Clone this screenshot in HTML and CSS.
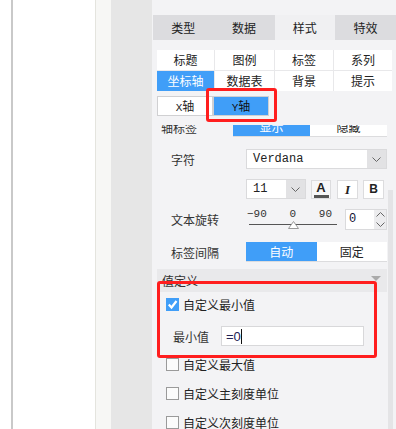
FILE: index.html
```html
<!DOCTYPE html>
<html lang="zh-CN">
<head>
    <meta charset="UTF-8">
    <title>坐标轴设置</title>
    <link rel="stylesheet" href="styles.css">
</head>
<body>
<div class="screen">
    <div class="margin"></div>
    <div class="rule"></div>
    <div class="canvas"></div>
    <div class="strip"></div>
    <div class="gutter"></div>

    <div class="panel">
        <div class="tabs">
            <div class="tab">类型</div>
            <div class="tab">数据</div>
            <div class="tab on">样式</div>
            <div class="tab">特效</div>
        </div>

        <div class="menu">
            <div class="cell">标题</div>
            <div class="cell">图例</div>
            <div class="cell">标签</div>
            <div class="cell">系列</div>
            <div class="cell on">坐标轴</div>
            <div class="cell">数据表</div>
            <div class="cell">背景</div>
            <div class="cell">提示</div>
        </div>

        <div class="axis-tabs">
            <div class="axis-tab"><span class="mono">X</span>轴</div>
            <div class="axis-tab on"><span class="mono">Y</span>轴</div>
        </div>

        <div class="scroll">
            <div class="content">
                <div class="row row-axis">
                    <div class="label">轴标签</div>
                    <div class="seg">
                        <div class="seg-item on">显示</div>
                        <div class="seg-item">隐藏</div>
                    </div>
                </div>

                <div class="row row-font">
                    <div class="label">字符</div>
                    <div class="select wide">
                        <span class="value mono">Verdana</span>
                        <span class="arrow"><svg width="9" height="5" viewBox="0 0 9 5"><polyline points="0.5,0.5 4.5,4.5 8.5,0.5" fill="none" stroke="#666"/></svg></span>
                    </div>
                </div>

                <div class="row row-size">
                    <div class="label"></div>
                    <div class="select small">
                        <span class="value mono">11</span>
                        <span class="arrow"><svg width="9" height="5" viewBox="0 0 9 5"><polyline points="0.5,0.5 4.5,4.5 8.5,0.5" fill="none" stroke="#666"/></svg></span>
                    </div>
                    <div class="btn btn-color">
                        <span class="glyph-a">A</span>
                        <span class="color-bar"></span>
                    </div>
                    <div class="btn btn-italic">I</div>
                    <div class="btn btn-bold">B</div>
                </div>

                <div class="row row-rotate">
                    <div class="label">文本旋转</div>
                    <div class="slider">
                        <div class="ticks mono">
                            <span>−90</span><span>0</span><span>90</span>
                        </div>
                        <div class="track">
                            <svg class="thumb-mark" width="11" height="8" viewBox="0 0 11 8"><polygon points="5.5,0.5 10.5,7.5 0.5,7.5" fill="#fff" stroke="#999"/></svg>
                        </div>
                    </div>
                    <div class="spinner">
                        <span class="value mono">0</span>
                        <span class="spin-arrows">
                            <svg width="9" height="5" viewBox="0 0 9 5"><polyline points="0.5,4.5 4.5,0.5 8.5,4.5" fill="none" stroke="#666"/></svg>
                            <svg width="9" height="5" viewBox="0 0 9 5"><polyline points="0.5,0.5 4.5,4.5 8.5,0.5" fill="none" stroke="#666"/></svg>
                        </span>
                    </div>
                </div>

                <div class="row row-gap">
                    <div class="label">标签间隔</div>
                    <div class="seg">
                        <div class="seg-item on">自动</div>
                        <div class="seg-item">固定</div>
                    </div>
                </div>

                <div class="section">
                    <span>值定义</span>
                    <span class="caret"></span>
                </div>

                <div class="check-row first">
                    <span class="box checked"><svg width="13" height="13" viewBox="0 0 13 13"><polyline points="2.8,6.5 5.5,9.5 10.5,3" fill="none" stroke="#fff" stroke-width="2.2"/></svg></span>
                    自定义最小值
                </div>
                <div class="row row-min">
                    <div class="label">最小值</div>
                    <div class="input"><span class="formula">=0</span><span class="caret-line"></span></div>
                </div>
                <div class="check-row"><span class="box"></span>自定义最大值</div>
                <div class="check-row"><span class="box"></span>自定义主刻度单位</div>
                <div class="check-row"><span class="box"></span>自定义次刻度单位</div>
            </div>
        </div>

        <div class="scroll-thumb"></div>
        <div class="mark mark-tab"></div>
        <div class="mark mark-min"></div>
    </div>
</div>
</body>
</html>
```

FILE: styles.css
```css
body{
    margin: 0;
    font-family: "Noto Sans CJK SC", "Noto Sans", sans-serif;
    font-size: 12px;
    color: #222;
}
.screen{
    display: flex;
    width: 396px;
    height: 429px;
    overflow: hidden;
}
.margin{
    width: 11px;
    background-color: #fff;
}
.rule{
    width: 2px;
    background-color: #c9c9c9;
}
.canvas{
    width: 82px;
    background-color: #fff;
    border-right: 1px solid #e4e4de;
}
.strip{
    width: 15px;
    background-color: #f7f7f5;
}
.gutter{
    width: 41px;
    background-color: #e6e6e6;
}
.panel{
    position: relative;
    width: 244px;
    background-color: #f3f3f5;
}
.mono{
    font-family: "Liberation Mono", "DejaVu Sans Mono", monospace;
}

/* top tabs */
.tabs{
    display: flex;
    margin: 15px 0 0 1px;
    height: 25px;
    background-color: #dcdcdf;
}
.tab{
    flex: 1;
    text-align: center;
    line-height: 25px;
    font-size: 12px;
}
.tab.on{
    background-color: #f0f0f2;
}

/* sub menu */
.menu{
    display: grid;
    grid-template-columns: 57px 59px 58px 58px;
    grid-auto-rows: 20px;
    gap: 1px;
    width: 235px;
    margin: 10px 0 0 5px;
    background-color: #e8e8ea;
}
.cell{
    background-color: #fff;
    text-align: center;
    line-height: 20px;
}
.cell.on{
    background-color: #409ef8;
    color: #fff;
}

.axis-tabs{
    display: flex;
    margin: 5px 0 0 5px;
}
.axis-tab{
    box-sizing: border-box;
    width: 56px;
    height: 20px;
    line-height: 18px;
    text-align: center;
    background-color: #fff;
    border: 1px solid #d0d0d2;
}
.axis-tab.on{
    background-color: #409ef8;
    color: #111;
}
.axis-tab .mono{
    font-size: 11px;
}

/* scrolled settings */
.scroll{
    margin-top: 9px;
    height: 304px;
    overflow: hidden;
}
.content{
    width: 230px;
    margin: -8px 0 0 5px;
}
.row{
    display: flex;
    align-items: center;
    padding-left: 14px;
    height: 20px;
}
.label{
    width: 75px;
    flex-shrink: 0;
    color: #333;
}
.row-axis{
    padding-left: 4px;
}
.row-axis .label{
    width: 72px;
}
.row-font{
    margin-top: 12px;
}
.row-size{
    margin-top: 10px;
}
.row-rotate{
    margin-top: 10px;
    height: 21px;
}
.row-gap{
    margin-top: 12px;
}

.seg{
    display: flex;
    flex: 1;
    height: 20px;
    background-color: #fff;
    border-bottom: 1px solid #dcdcde;
    box-sizing: border-box;
}
.seg-item{
    flex: 1;
    text-align: center;
    line-height: 20px;
}
.seg-item.on{
    background-color: #409ef8;
    color: #fff;
}

.select{
    box-sizing: border-box;
    display: flex;
    height: 20px;
    background-color: #fff;
    border: 1px solid #dadadc;
}
.select.wide{
    width: 141px;
}
.select.small{
    width: 60px;
}
.select .value{
    flex: 1;
    padding-left: 6px;
    line-height: 18px;
    font-size: 12px;
    color: #222;
}
.arrow{
    display: flex;
    align-items: center;
    justify-content: center;
    width: 19px;
    background-color: #e2e2e4;
}

.btn{
    box-sizing: border-box;
    height: 19px;
    margin-left: 6px;
    border: 1px solid #dcdcde;
    background-color: #fff;
    text-align: center;
    line-height: 17px;
}
.btn-color{
    width: 20px;
    margin-left: 5px;
    background-color: #f7f7f8;
    display: flex;
    flex-direction: column;
    align-items: center;
}
.glyph-a{
    font-family: "Liberation Sans", Arial, sans-serif;
    font-weight: bold;
    font-size: 13px;
    line-height: 12px;
    margin-top: 1px;
}
.color-bar{
    width: 15px;
    height: 3px;
    margin-top: 1px;
    background-color: #555;
}
.btn-italic{
    width: 21px;
    font-family: "Liberation Serif", serif;
    font-style: italic;
    font-weight: bold;
    font-size: 13px;
}
.btn-bold{
    width: 21px;
    margin-left: 5px;
    font-family: "Liberation Sans", Arial, sans-serif;
    font-weight: bold;
    font-size: 12px;
}

.slider{
    width: 91px;
    height: 21px;
}
.ticks{
    display: flex;
    justify-content: space-between;
    padding: 0 5px 0 1px;
    font-size: 11px;
    line-height: 11px;
    color: #333;
}
.track{
    position: relative;
    height: 1px;
    margin: 4px 0 0 3px;
    background-color: #555;
}
.thumb-mark{
    position: absolute;
    left: 39px;
    top: -3px;
}
.spinner{
    box-sizing: border-box;
    display: flex;
    width: 42px;
    height: 21px;
    margin-left: 8px;
    background-color: #fff;
    border: 1px solid #dadadc;
}
.spinner .value{
    flex: 1;
    padding-left: 3px;
    line-height: 19px;
    font-size: 12px;
    color: #113;
}
.spin-arrows{
    display: flex;
    flex-direction: column;
    justify-content: space-around;
    align-items: center;
    width: 12px;
    background-color: #ececee;
}

/* value definition */
.section{
    display: flex;
    justify-content: space-between;
    align-items: center;
    margin-top: 7px;
    height: 23px;
    padding: 0 6px 0 5px;
    background-color: #e9e9eb;
    color: #333;
}
.caret{
    width: 0;
    height: 0;
    border-left: 5px solid transparent;
    border-right: 5px solid transparent;
    border-top: 5px solid #aaa;
    margin-top: -4px;
}
.check-row{
    display: flex;
    align-items: center;
    height: 18px;
    margin-top: 11px;
    padding-left: 9px;
    color: #222;
}
.check-row.first{
    margin-top: 3px;
}
.row-min + .check-row{
    margin-top: 9px;
}
.box{
    box-sizing: border-box;
    width: 13px;
    height: 13px;
    margin-right: 4px;
    border: 1px solid #9a9a9a;
    background-color: #fbfbfb;
}
.box.checked{
    border: none;
    background-color: #409ef8;
}
.box svg{
    display: block;
}
.row-min{
    margin-top: 13px;
    padding-left: 16px;
}
.row-min .label{
    width: 48px;
}
.input{
    box-sizing: border-box;
    display: flex;
    align-items: center;
    width: 143px;
    height: 20px;
    padding-left: 4px;
    background-color: #fff;
    border: 1px solid #d8d8da;
}
.formula{
    font-family: "Liberation Sans", Arial, sans-serif;
    font-size: 13px;
    color: #225;
}
.caret-line{
    width: 1px;
    height: 15px;
    background-color: #111;
}

.scroll-thumb{
    position: absolute;
    left: 236px;
    top: 190px;
    width: 5px;
    height: 239px;
    background-color: #e4e4e6;
}

/* red annotations over the panel */
.mark{
    position: absolute;
    box-sizing: border-box;
    border: 3px solid #ff1e1e;
    border-radius: 3px;
}
.mark-tab{
    left: 54px;
    top: 88px;
    width: 71px;
    height: 34px;
}
.mark-min{
    left: 5px;
    top: 281px;
    width: 220px;
    height: 77px;
}
```
